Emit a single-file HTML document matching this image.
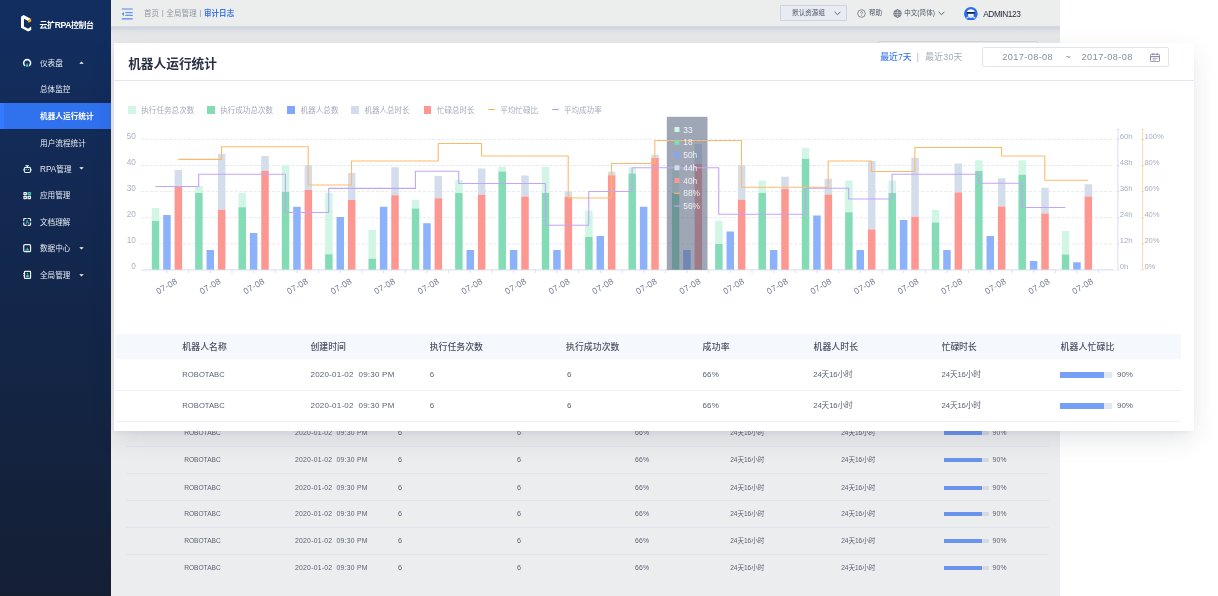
<!DOCTYPE html>
<html lang="zh-CN">
<head>
<meta charset="utf-8">
<title>云扩RPA控制台 - 机器人运行统计</title>
<style>
*{box-sizing:border-box;margin:0;padding:0}
html,body{width:1218px;height:596px;overflow:hidden;background:#fff}
body{position:relative;font-family:"Liberation Sans","Noto Sans CJK SC",sans-serif;-webkit-font-smoothing:antialiased}
.t{position:absolute;white-space:nowrap;height:20px;line-height:20px}
.abs{position:absolute}
#page{position:absolute;left:0;top:0;width:1060px;height:596px;background:#ecedee;overflow:hidden}
#side{position:absolute;left:0;top:0;width:110.5px;height:596px;background:linear-gradient(180deg,#122e61 0%,#141f34 100%)}
#top{position:absolute;left:110.5px;top:0;width:949.5px;height:26.3px;background:#eceeed}
#strip{position:absolute;left:110.5px;top:26.3px;width:949.5px;height:17px;background:linear-gradient(180deg,#dde0e5 0,#d1d5dd 0.8px,#d2d6de 2.8px,#dfe2e6 4.6px,#e5e7e8 9px,#e8e9ea 16px)}
#bgcard{position:absolute;left:114.8px;top:43px;width:945.2px;height:560px;background:#ecedee}
#ov{position:absolute;left:113.8px;top:42.6px;width:1080.4px;height:388.2px;background:#fff;box-shadow:0 9px 24px -2px rgba(40,50,80,.13),0 3px 6px -2px rgba(40,50,80,.06)}
.hl{position:absolute;height:1px}
#root{position:absolute;left:0;top:0;width:1218px;height:596px;will-change:transform}
</style>
</head>
<body>
<div id="root">

<div id="page">
<div id="strip"></div>
<div id="bgcard"></div>
<div class="abs" style="left:876.5px;top:40.6px;width:161px;height:18px;border:1px solid #d4d8e2;border-radius:2px;background:#eceded"></div>
<div class="hl" style="left:126.4px;top:446.2px;width:922.2px;background:#e0e4ee"></div>
<div class="hl" style="left:126.4px;top:473.0px;width:922.2px;background:#e0e4ee"></div>
<div class="hl" style="left:126.4px;top:500.0px;width:922.2px;background:#e0e4ee"></div>
<div class="hl" style="left:126.4px;top:527.1px;width:922.2px;background:#e0e4ee"></div>
<div class="hl" style="left:126.4px;top:554.2px;width:922.2px;background:#e0e4ee"></div>
<div class="t " style="left:184.20px;top:423.30px;font-size:6.60px;color:#5b6170;font-weight:400;letter-spacing:-0.002px;">ROBOTABC</div>
<div class="t " style="left:295.00px;top:423.30px;font-size:6.80px;color:#5b6170;font-weight:400;letter-spacing:0.253px;">2020-01-02&nbsp; 09:30 PM</div>
<div class="t " style="left:398.00px;top:423.30px;font-size:7.20px;color:#5b6170;font-weight:400;">6</div>
<div class="t " style="left:517.00px;top:423.30px;font-size:7.20px;color:#5b6170;font-weight:400;">6</div>
<div class="t " style="left:635.00px;top:423.30px;font-size:6.80px;color:#5b6170;font-weight:400;letter-spacing:0.230px;">66%</div>
<div class="t " style="left:730.20px;top:423.30px;font-size:6.60px;color:#5b6170;font-weight:400;letter-spacing:-0.050px;">24天16小时</div>
<div class="t " style="left:841.20px;top:423.30px;font-size:6.60px;color:#5b6170;font-weight:400;letter-spacing:-0.050px;">24天16小时</div>
<div class="abs" style="left:944.2px;top:431.3px;width:44.6px;height:4px;background:#d6d9e0"></div>
<div class="abs" style="left:944.2px;top:431.3px;width:37.5px;height:4px;background:#6a94ec"></div>
<div class="t " style="left:992.60px;top:423.30px;font-size:6.80px;color:#5b6170;font-weight:400;letter-spacing:0.230px;">90%</div>
<div class="t " style="left:184.20px;top:450.40px;font-size:6.60px;color:#5b6170;font-weight:400;letter-spacing:-0.002px;">ROBOTABC</div>
<div class="t " style="left:295.00px;top:450.40px;font-size:6.80px;color:#5b6170;font-weight:400;letter-spacing:0.253px;">2020-01-02&nbsp; 09:30 PM</div>
<div class="t " style="left:398.00px;top:450.40px;font-size:7.20px;color:#5b6170;font-weight:400;">6</div>
<div class="t " style="left:517.00px;top:450.40px;font-size:7.20px;color:#5b6170;font-weight:400;">6</div>
<div class="t " style="left:635.00px;top:450.40px;font-size:6.80px;color:#5b6170;font-weight:400;letter-spacing:0.230px;">66%</div>
<div class="t " style="left:730.20px;top:450.40px;font-size:6.60px;color:#5b6170;font-weight:400;letter-spacing:-0.050px;">24天16小时</div>
<div class="t " style="left:841.20px;top:450.40px;font-size:6.60px;color:#5b6170;font-weight:400;letter-spacing:-0.050px;">24天16小时</div>
<div class="abs" style="left:944.2px;top:458.4px;width:44.6px;height:4px;background:#d6d9e0"></div>
<div class="abs" style="left:944.2px;top:458.4px;width:37.5px;height:4px;background:#6a94ec"></div>
<div class="t " style="left:992.60px;top:450.40px;font-size:6.80px;color:#5b6170;font-weight:400;letter-spacing:0.230px;">90%</div>
<div class="t " style="left:184.20px;top:477.50px;font-size:6.60px;color:#5b6170;font-weight:400;letter-spacing:-0.002px;">ROBOTABC</div>
<div class="t " style="left:295.00px;top:477.50px;font-size:6.80px;color:#5b6170;font-weight:400;letter-spacing:0.253px;">2020-01-02&nbsp; 09:30 PM</div>
<div class="t " style="left:398.00px;top:477.50px;font-size:7.20px;color:#5b6170;font-weight:400;">6</div>
<div class="t " style="left:517.00px;top:477.50px;font-size:7.20px;color:#5b6170;font-weight:400;">6</div>
<div class="t " style="left:635.00px;top:477.50px;font-size:6.80px;color:#5b6170;font-weight:400;letter-spacing:0.230px;">66%</div>
<div class="t " style="left:730.20px;top:477.50px;font-size:6.60px;color:#5b6170;font-weight:400;letter-spacing:-0.050px;">24天16小时</div>
<div class="t " style="left:841.20px;top:477.50px;font-size:6.60px;color:#5b6170;font-weight:400;letter-spacing:-0.050px;">24天16小时</div>
<div class="abs" style="left:944.2px;top:485.5px;width:44.6px;height:4px;background:#d6d9e0"></div>
<div class="abs" style="left:944.2px;top:485.5px;width:37.5px;height:4px;background:#6a94ec"></div>
<div class="t " style="left:992.60px;top:477.50px;font-size:6.80px;color:#5b6170;font-weight:400;letter-spacing:0.230px;">90%</div>
<div class="t " style="left:184.20px;top:504.30px;font-size:6.60px;color:#5b6170;font-weight:400;letter-spacing:-0.002px;">ROBOTABC</div>
<div class="t " style="left:295.00px;top:504.30px;font-size:6.80px;color:#5b6170;font-weight:400;letter-spacing:0.253px;">2020-01-02&nbsp; 09:30 PM</div>
<div class="t " style="left:398.00px;top:504.30px;font-size:7.20px;color:#5b6170;font-weight:400;">6</div>
<div class="t " style="left:517.00px;top:504.30px;font-size:7.20px;color:#5b6170;font-weight:400;">6</div>
<div class="t " style="left:635.00px;top:504.30px;font-size:6.80px;color:#5b6170;font-weight:400;letter-spacing:0.230px;">66%</div>
<div class="t " style="left:730.20px;top:504.30px;font-size:6.60px;color:#5b6170;font-weight:400;letter-spacing:-0.050px;">24天16小时</div>
<div class="t " style="left:841.20px;top:504.30px;font-size:6.60px;color:#5b6170;font-weight:400;letter-spacing:-0.050px;">24天16小时</div>
<div class="abs" style="left:944.2px;top:512.3px;width:44.6px;height:4px;background:#d6d9e0"></div>
<div class="abs" style="left:944.2px;top:512.3px;width:37.5px;height:4px;background:#6a94ec"></div>
<div class="t " style="left:992.60px;top:504.30px;font-size:6.80px;color:#5b6170;font-weight:400;letter-spacing:0.230px;">90%</div>
<div class="t " style="left:184.20px;top:531.40px;font-size:6.60px;color:#5b6170;font-weight:400;letter-spacing:-0.002px;">ROBOTABC</div>
<div class="t " style="left:295.00px;top:531.40px;font-size:6.80px;color:#5b6170;font-weight:400;letter-spacing:0.253px;">2020-01-02&nbsp; 09:30 PM</div>
<div class="t " style="left:398.00px;top:531.40px;font-size:7.20px;color:#5b6170;font-weight:400;">6</div>
<div class="t " style="left:517.00px;top:531.40px;font-size:7.20px;color:#5b6170;font-weight:400;">6</div>
<div class="t " style="left:635.00px;top:531.40px;font-size:6.80px;color:#5b6170;font-weight:400;letter-spacing:0.230px;">66%</div>
<div class="t " style="left:730.20px;top:531.40px;font-size:6.60px;color:#5b6170;font-weight:400;letter-spacing:-0.050px;">24天16小时</div>
<div class="t " style="left:841.20px;top:531.40px;font-size:6.60px;color:#5b6170;font-weight:400;letter-spacing:-0.050px;">24天16小时</div>
<div class="abs" style="left:944.2px;top:539.4px;width:44.6px;height:4px;background:#d6d9e0"></div>
<div class="abs" style="left:944.2px;top:539.4px;width:37.5px;height:4px;background:#6a94ec"></div>
<div class="t " style="left:992.60px;top:531.40px;font-size:6.80px;color:#5b6170;font-weight:400;letter-spacing:0.230px;">90%</div>
<div class="t " style="left:184.20px;top:558.40px;font-size:6.60px;color:#5b6170;font-weight:400;letter-spacing:-0.002px;">ROBOTABC</div>
<div class="t " style="left:295.00px;top:558.40px;font-size:6.80px;color:#5b6170;font-weight:400;letter-spacing:0.253px;">2020-01-02&nbsp; 09:30 PM</div>
<div class="t " style="left:398.00px;top:558.40px;font-size:7.20px;color:#5b6170;font-weight:400;">6</div>
<div class="t " style="left:517.00px;top:558.40px;font-size:7.20px;color:#5b6170;font-weight:400;">6</div>
<div class="t " style="left:635.00px;top:558.40px;font-size:6.80px;color:#5b6170;font-weight:400;letter-spacing:0.230px;">66%</div>
<div class="t " style="left:730.20px;top:558.40px;font-size:6.60px;color:#5b6170;font-weight:400;letter-spacing:-0.050px;">24天16小时</div>
<div class="t " style="left:841.20px;top:558.40px;font-size:6.60px;color:#5b6170;font-weight:400;letter-spacing:-0.050px;">24天16小时</div>
<div class="abs" style="left:944.2px;top:566.4px;width:44.6px;height:4px;background:#d6d9e0"></div>
<div class="abs" style="left:944.2px;top:566.4px;width:37.5px;height:4px;background:#6a94ec"></div>
<div class="t " style="left:992.60px;top:558.40px;font-size:6.80px;color:#5b6170;font-weight:400;letter-spacing:0.230px;">90%</div>
<div id="top"></div>
<svg class="abs" style="left:121px;top:7.5px" width="13" height="12" viewBox="0 0 13 12">
<g stroke="#5585ea" fill="none" stroke-linecap="round"><path d="M1.2 1.03H11.3M1.2 10.85H11.3" stroke-width="1.15"/><path d="M4.8 4.6H11.3M4.8 7.38H11.3" stroke-width="1.3" stroke="#6b95ec"/></g>
<path d="M0.74 6L3 3.9V8.1Z" fill="#5585ea"/></svg>
<div class="t " style="left:144.00px;top:4.30px;font-size:7.50px;color:#8f95a3;font-weight:400;letter-spacing:0.097px;">首页 <span style="position:relative;top:-0.9px;font-size:8px;margin:0 0.3px">|</span> 全局管理 <span style="position:relative;top:-0.9px;font-size:8px;margin:0 0.3px">|</span> <b style="color:#3b74e6;font-weight:700">审计日志</b></div>
<div class="abs" style="left:780.3px;top:5.4px;width:66.3px;height:15.5px;border:1px solid #ccd3e2;background:#e8ebf1;border-radius:1px"></div>
<div class="t " style="left:792.20px;top:3.40px;font-size:6.50px;color:#4b5263;font-weight:400;letter-spacing:0.060px;">默认资源组</div>
<svg class="abs" style="left:834.3px;top:10.8px" width="7" height="5" viewBox="0 0 7 5"><path d="M0.6 0.8L3.5 3.7L6.4 0.8" stroke="#4b5263" stroke-width="0.9" fill="none"/></svg>
<svg class="abs" style="left:857.4px;top:9.1px" width="9" height="9" viewBox="0 0 9 9"><circle cx="4.5" cy="4.5" r="3.8" stroke="#5a6070" stroke-width="0.7" fill="none"/><path d="M3.4 3.6C3.4 2.3 5.6 2.3 5.6 3.6C5.6 4.4 4.5 4.4 4.5 5.3M4.5 6.1V6.8" stroke="#5a6070" stroke-width="0.7" fill="none"/></svg>
<div class="t " style="left:869.00px;top:3.40px;font-size:6.50px;color:#4b5263;font-weight:400;letter-spacing:0.000px;">帮助</div>
<svg class="abs" style="left:892.9px;top:9.1px" width="9" height="9" viewBox="0 0 9 9"><g stroke="#5a6070" stroke-width="0.7" fill="none"><circle cx="4.5" cy="4.5" r="3.8"/><ellipse cx="4.5" cy="4.5" rx="1.7" ry="3.8"/><path d="M0.7 4.5H8.3M1.2 2.7H7.8M1.2 6.3H7.8"/></g></svg>
<div class="t " style="left:904.20px;top:3.40px;font-size:6.50px;color:#4b5263;font-weight:400;letter-spacing:0.076px;">中文(简体)</div>
<svg class="abs" style="left:938.2px;top:10.8px" width="7" height="5" viewBox="0 0 7 5"><path d="M0.6 0.8L3.5 3.7L6.4 0.8" stroke="#4b5263" stroke-width="0.9" fill="none"/></svg>
<svg class="abs" style="left:964.25px;top:6.5px" width="13.7" height="13.7" viewBox="0 0 27.4 27.4">
<circle cx="13.7" cy="13.7" r="13.7" fill="#2b6bee"/>
<path d="M3.8 21.6L8.6 18.6L9.6 21.4L5.4 23.6ZM23.6 21.6L18.8 18.6L17.8 21.4L22 23.6Z" fill="#dfe9fb" opacity="0.85"/>
<path d="M6 10.4C6 2.6 21.4 2.6 21.4 10.4Z" fill="#ffffff"/>
<path d="M7.6 13.2H19.8L18.6 19.6C17.2 22.6 10.2 22.6 8.8 19.6Z" fill="#f4f8ff"/>
<path d="M11.6 16.4H15.8L15.2 20.4H12.2Z" fill="#cfe0fb"/>
<rect x="5.6" y="9.8" width="16.2" height="3.8" rx="1.2" fill="#14244e"/>
</svg>
<div class="t " style="left:983.20px;top:3.50px;font-size:8.30px;color:#262c3a;font-weight:400;letter-spacing:-0.410px;">ADMIN123</div>
<div id="side">
<svg class="abs" style="left:20px;top:14px" width="12" height="18" viewBox="0 0 12 18">
<path d="M0.98 2.86L3.66 0.98L11.18 5L8.06 6.3V6.9L3.93 4.74V12.5L8.2 14.67L11.18 12.5V16L8.2 17.6L0.98 13.86Z" fill="#fff"/>
<path d="M8.06 6.3L11.18 5V7.42L8.06 8.76Z" fill="#f7b500"/>
</svg>
<div class="t " style="left:39.60px;top:15.40px;font-size:7.90px;color:#ffffff;font-weight:700;letter-spacing:-0.375px;">云扩<span style="font-size:8.6px">RPA</span>控制台</div>
<div class="abs" style="left:0;top:102.8px;width:110.5px;height:26.1px;background:#3071ee"></div>
<div class="abs" style="left:0;top:102.8px;width:4.2px;height:26.1px;background:#337aff"></div>
<div class="t " style="left:40.00px;top:54.00px;font-size:7.60px;color:#e6eaf2;font-weight:400;letter-spacing:0.006px;">仪表盘</div>
<div class="t " style="left:40.00px;top:80.20px;font-size:7.60px;color:#e6eaf2;font-weight:400;letter-spacing:0.031px;">总体监控</div>
<div class="t " style="left:40.00px;top:106.80px;font-size:7.65px;color:#ffffff;font-weight:700;letter-spacing:0.017px;">机器人运行统计</div>
<div class="t " style="left:40.00px;top:133.50px;font-size:7.60px;color:#e6eaf2;font-weight:400;letter-spacing:0.040px;">用户流程统计</div>
<div class="t " style="left:40.00px;top:159.60px;font-size:7.60px;color:#e6eaf2;font-weight:400;letter-spacing:0.016px;"><span style="font-size:8.2px">RPA</span>管理</div>
<div class="t " style="left:40.00px;top:186.40px;font-size:7.60px;color:#e6eaf2;font-weight:400;letter-spacing:0.031px;">应用管理</div>
<div class="t " style="left:40.00px;top:212.60px;font-size:7.60px;color:#e6eaf2;font-weight:400;letter-spacing:0.031px;">文档理解</div>
<div class="t " style="left:40.00px;top:239.10px;font-size:7.60px;color:#e6eaf2;font-weight:400;letter-spacing:0.031px;">数据中心</div>
<div class="t " style="left:40.00px;top:265.60px;font-size:7.60px;color:#e6eaf2;font-weight:400;letter-spacing:0.031px;">全局管理</div>
<svg class="abs" style="left:78.8px;top:61.4px" width="5" height="3" viewBox="0 0 5 3"><path d="M0.3 2.8L2.5 0.4L4.7 2.8Z" fill="#fff"/></svg>
<svg class="abs" style="left:78.8px;top:167.4px" width="5" height="3" viewBox="0 0 5 3"><path d="M0.3 0.2L2.5 2.6L4.7 0.2Z" fill="#fff"/></svg>
<svg class="abs" style="left:78.8px;top:247.0px" width="5" height="3" viewBox="0 0 5 3"><path d="M0.3 0.2L2.5 2.6L4.7 0.2Z" fill="#fff"/></svg>
<svg class="abs" style="left:78.8px;top:273.5px" width="5" height="3" viewBox="0 0 5 3"><path d="M0.3 0.2L2.5 2.6L4.7 0.2Z" fill="#fff"/></svg>
<svg class="abs" style="left:22px;top:58px" width="10" height="10" viewBox="0 0 10 10"><path d="M3.19 7.92A3.45 3.45 0 1 1 7.05 7.92" stroke="#eef1f7" stroke-width="1.6" fill="none"/><path d="M5.12 4.6L6.45 8.84H3.8Z" fill="#3fd6c4"/></svg>
<svg class="abs" style="left:22px;top:164px" width="10" height="10" viewBox="0 0 10 10"><path d="M3.4 1.5H6.9" stroke="#eef1f7" stroke-width="0.8" fill="none"/><path d="M5.2 1.5V3.2" stroke="#eef1f7" stroke-width="1.2" fill="none"/><rect x="2.3" y="3.35" width="6.3" height="5.1" rx="1.5" stroke="#eef1f7" stroke-width="1.15" fill="none"/><path d="M1.4 5V6.6M9.4 5V6.6" stroke="#eef1f7" stroke-width="0.5"/><circle cx="4.2" cy="5.55" r="0.7" fill="#3fd6c4"/><circle cx="6.45" cy="5.55" r="0.7" fill="#3fd6c4"/></svg>
<svg class="abs" style="left:22px;top:191px" width="10" height="10" viewBox="0 0 10 10"><g stroke="#eef1f7" stroke-width="1.25" fill="none"><rect x="1.95" y="1.5" width="2.4" height="2.1" rx="0.3"/><rect x="1.95" y="5.3" width="2.4" height="2.2" rx="0.3"/><rect x="6.05" y="5.3" width="2.4" height="2.2" rx="0.3"/></g><rect x="6.05" y="1.5" width="2.4" height="2.1" rx="0.3" stroke="#3fd6c4" stroke-width="1.25" fill="none"/></svg>
<svg class="abs" style="left:22px;top:217px" width="10" height="10" viewBox="0 0 10 10"><path d="M1.74 4.3V2.5Q1.74 1.5 2.74 1.5H4.6M5.7 1.5H7.54Q8.54 1.5 8.54 2.5V4.3M1.74 5.6V7.3Q1.74 8.3 2.74 8.3H4.6M5.7 8.3H7.54Q8.54 8.3 8.54 7.3V5.6" stroke="#eef1f7" stroke-width="1.2" fill="none"/><text x="5.15" y="6.7" text-anchor="middle" font-size="4.9" font-weight="700" fill="#3fd6c4" font-family="Liberation Sans, sans-serif">A</text></svg>
<svg class="abs" style="left:22px;top:243px" width="10" height="10" viewBox="0 0 10 10"><rect x="1.74" y="1.7" width="6.8" height="7" rx="1" stroke="#eef1f7" stroke-width="1.2" fill="none"/><path d="M3.25 7.6V6.7L4.6 6.2L5.37 4.1L6.1 6.2L7.05 6.7V7.6Z" fill="#3fd6c4"/></svg>
<svg class="abs" style="left:22px;top:270px" width="10" height="10" viewBox="0 0 10 10"><rect x="2.5" y="1.4" width="6.04" height="7" rx="0.6" stroke="#eef1f7" stroke-width="1.2" fill="none"/><path d="M1.1 3.5H2.3M1.1 5.7H2.3" stroke="#eef1f7" stroke-width="0.9"/><circle cx="5.5" cy="3.75" r="0.85" fill="#3fd6c4"/><path d="M4.1 7.1V6C4.1 4.5 6.9 4.5 6.9 6V7.1Z" fill="#3fd6c4"/></svg>
</div>
</div>
<div id="ov"></div>
<div class="t " style="left:128.20px;top:53.50px;font-size:12.70px;color:#2a3142;font-weight:700;letter-spacing:-0.009px;">机器人运行统计</div>
<div class="hl" style="left:113.8px;top:80px;width:1080.4px;background:#e3e7f2"></div>
<div class="t " style="left:880.30px;top:47.30px;font-size:8.80px;color:#3b78f0;font-weight:500;letter-spacing:0.026px;">最近7天</div>
<div class="t " style="left:916.80px;top:46.60px;font-size:8.50px;color:#a9afbd;font-weight:400;">|</div>
<div class="t " style="left:925.30px;top:47.30px;font-size:8.80px;color:#a3a9b8;font-weight:400;letter-spacing:0.222px;">最近30天</div>
<div class="abs" style="left:982.3px;top:47.3px;width:186.3px;height:19.8px;border:1px solid #e0e4ef;border-radius:2px;background:#fff"></div>
<div class="t " style="left:1002.30px;top:47.40px;font-size:9.20px;color:#858c9e;font-weight:400;letter-spacing:0.380px;">2017-08-08</div>
<div class="t " style="left:1065.60px;top:47.20px;font-size:9.00px;color:#858c9e;font-weight:400;">~</div>
<div class="t " style="left:1081.60px;top:47.40px;font-size:9.20px;color:#858c9e;font-weight:400;letter-spacing:0.420px;">2017-08-08</div>
<svg class="abs" style="left:1150.2px;top:52.6px" width="10" height="9.4" viewBox="0 0 10 9.4"><rect x="0.6" y="1.3" width="8.8" height="7.5" rx="1" stroke="#7f8699" stroke-width="1" fill="none"/><path d="M0.6 3.6H9.4" stroke="#7f8699" stroke-width="1"/><path d="M2.8 0.2V2.2M7.2 0.2V2.2" stroke="#7f8699" stroke-width="0.9"/><path d="M2.6 5.4H7.4M2.6 7H5.6" stroke="#7f8699" stroke-width="0.7"/></svg>
<svg class="abs" style="left:0;top:0" width="1218" height="596" viewBox="0 0 1218 596" font-family='&quot;Liberation Sans&quot;,&quot;Noto Sans CJK SC&quot;,sans-serif'>
<!--legend-->
<line x1="140.8" y1="139.4" x2="1114" y2="139.4" stroke="#e3e6ef" stroke-width="0.9" stroke-dasharray="3 1.7"/>
<line x1="140.8" y1="165.5" x2="1114" y2="165.5" stroke="#e3e6ef" stroke-width="0.9" stroke-dasharray="3 1.7"/>
<line x1="140.8" y1="191.6" x2="1114" y2="191.6" stroke="#e3e6ef" stroke-width="0.9" stroke-dasharray="3 1.7"/>
<line x1="140.8" y1="217.7" x2="1114" y2="217.7" stroke="#e3e6ef" stroke-width="0.9" stroke-dasharray="3 1.7"/>
<line x1="140.8" y1="243.8" x2="1114" y2="243.8" stroke="#e3e6ef" stroke-width="0.9" stroke-dasharray="3 1.7"/>
<line x1="141" y1="269.9" x2="1114.3" y2="269.9" stroke="#dfe3f2" stroke-width="1.1"/>
<path d="M167.00 270V273.2M188.67 270V273.2M210.33 270V273.2M232.00 270V273.2M253.67 270V273.2M275.34 270V273.2M297.00 270V273.2M318.67 270V273.2M340.34 270V273.2M362.00 270V273.2M383.67 270V273.2M405.34 270V273.2M427.00 270V273.2M448.67 270V273.2M470.34 270V273.2M492.00 270V273.2M513.67 270V273.2M535.34 270V273.2M557.01 270V273.2M578.67 270V273.2M600.34 270V273.2M622.01 270V273.2M643.67 270V273.2M665.34 270V273.2M687.01 270V273.2M708.68 270V273.2M730.34 270V273.2M752.01 270V273.2M773.68 270V273.2M795.34 270V273.2M817.01 270V273.2M838.68 270V273.2M860.34 270V273.2M882.01 270V273.2M903.68 270V273.2M925.35 270V273.2M947.01 270V273.2M968.68 270V273.2M990.35 270V273.2M1012.01 270V273.2M1033.68 270V273.2M1055.35 270V273.2M1077.01 270V273.2M1098.68 270V273.2" stroke="#d9def0" stroke-width="0.9" fill="none"/>
<text x="135.8" y="138.8" text-anchor="end" font-size="8.2" fill="#aab1c2">50</text>
<text x="135.8" y="164.9" text-anchor="end" font-size="8.2" fill="#aab1c2">40</text>
<text x="135.8" y="191.0" text-anchor="end" font-size="8.2" fill="#aab1c2">30</text>
<text x="135.8" y="217.1" text-anchor="end" font-size="8.2" fill="#aab1c2">20</text>
<text x="135.8" y="243.2" text-anchor="end" font-size="8.2" fill="#aab1c2">10</text>
<text x="135.8" y="269.3" text-anchor="end" font-size="8.2" fill="#aab1c2">0</text>
<path d="M1117.9 129.3V269.9M1116.5 129.3H1119.3M1116.5 139.4H1119.3M1116.5 165.5H1119.3M1116.5 191.6H1119.3M1116.5 217.7H1119.3M1116.5 243.8H1119.3M1116.5 269.9H1119.3" stroke="#d3d8e6" stroke-width="0.8" fill="none"/>
<path d="M1142.6 129.3V269.9M1141.2 129.3H1144M1141.2 139.4H1144M1141.2 165.5H1144M1141.2 191.6H1144M1141.2 217.7H1144M1141.2 243.8H1144M1141.2 269.9H1144" stroke="#fbcf9a" stroke-width="0.8" fill="none"/>
<text x="1119.7" y="138.7" font-size="7.8" fill="#a7afc1">60h</text>
<text x="1144.4" y="138.7" font-size="7.6" fill="#a7afc1">100%</text>
<text x="1119.7" y="164.8" font-size="7.8" fill="#a7afc1">48h</text>
<text x="1144.4" y="164.8" font-size="7.6" fill="#a7afc1">80%</text>
<text x="1119.7" y="190.9" font-size="7.8" fill="#a7afc1">36h</text>
<text x="1144.4" y="190.9" font-size="7.6" fill="#a7afc1">60%</text>
<text x="1119.7" y="217.0" font-size="7.8" fill="#a7afc1">24h</text>
<text x="1144.4" y="217.0" font-size="7.6" fill="#a7afc1">40%</text>
<text x="1119.7" y="243.1" font-size="7.8" fill="#a7afc1">12h</text>
<text x="1144.4" y="243.1" font-size="7.6" fill="#a7afc1">20%</text>
<text x="1119.7" y="269.2" font-size="7.8" fill="#a7afc1">0h</text>
<text x="1144.4" y="269.2" font-size="7.6" fill="#a7afc1">0%</text>
<rect x="151.80" y="208.00" width="7.50" height="13.00" fill="#d2f6e6"/>
<rect x="151.80" y="221.00" width="7.50" height="48.60" fill="#84dcb6"/>
<rect x="163.20" y="215.00" width="7.50" height="54.60" fill="#8cb2fb"/>
<rect x="174.60" y="170.00" width="7.50" height="16.75" fill="#d4ddec"/>
<rect x="174.60" y="186.75" width="7.50" height="82.85" fill="#fd9792"/>
<rect x="195.13" y="186.00" width="7.50" height="7.00" fill="#d2f6e6"/>
<rect x="195.13" y="193.00" width="7.50" height="76.60" fill="#84dcb6"/>
<rect x="206.53" y="250.00" width="7.50" height="19.60" fill="#8cb2fb"/>
<rect x="217.93" y="154.00" width="7.50" height="55.75" fill="#d4ddec"/>
<rect x="217.93" y="209.75" width="7.50" height="59.85" fill="#fd9792"/>
<rect x="238.47" y="193.00" width="7.50" height="14.25" fill="#d2f6e6"/>
<rect x="238.47" y="207.25" width="7.50" height="62.35" fill="#84dcb6"/>
<rect x="249.87" y="233.00" width="7.50" height="36.60" fill="#8cb2fb"/>
<rect x="261.27" y="156.00" width="7.50" height="15.00" fill="#d4ddec"/>
<rect x="261.27" y="171.00" width="7.50" height="98.60" fill="#fd9792"/>
<rect x="281.80" y="165.25" width="7.50" height="26.50" fill="#d2f6e6"/>
<rect x="281.80" y="191.75" width="7.50" height="77.85" fill="#84dcb6"/>
<rect x="293.20" y="206.75" width="7.50" height="62.85" fill="#8cb2fb"/>
<rect x="304.60" y="165.25" width="7.50" height="24.75" fill="#d4ddec"/>
<rect x="304.60" y="190.00" width="7.50" height="79.60" fill="#fd9792"/>
<rect x="325.13" y="193.00" width="7.50" height="61.25" fill="#d2f6e6"/>
<rect x="325.13" y="254.25" width="7.50" height="15.35" fill="#84dcb6"/>
<rect x="336.53" y="217.00" width="7.50" height="52.60" fill="#8cb2fb"/>
<rect x="347.93" y="173.00" width="7.50" height="27.00" fill="#d4ddec"/>
<rect x="347.93" y="200.00" width="7.50" height="69.60" fill="#fd9792"/>
<rect x="368.47" y="229.75" width="7.50" height="29.00" fill="#d2f6e6"/>
<rect x="368.47" y="258.75" width="7.50" height="10.85" fill="#84dcb6"/>
<rect x="379.87" y="206.75" width="7.50" height="62.85" fill="#8cb2fb"/>
<rect x="391.27" y="167.25" width="7.50" height="28.00" fill="#d4ddec"/>
<rect x="391.27" y="195.25" width="7.50" height="74.35" fill="#fd9792"/>
<rect x="411.80" y="199.75" width="7.50" height="8.75" fill="#d2f6e6"/>
<rect x="411.80" y="208.50" width="7.50" height="61.10" fill="#84dcb6"/>
<rect x="423.20" y="223.25" width="7.50" height="46.35" fill="#8cb2fb"/>
<rect x="434.60" y="176.00" width="7.50" height="22.25" fill="#d4ddec"/>
<rect x="434.60" y="198.25" width="7.50" height="71.35" fill="#fd9792"/>
<rect x="455.13" y="179.75" width="7.50" height="13.25" fill="#d2f6e6"/>
<rect x="455.13" y="193.00" width="7.50" height="76.60" fill="#84dcb6"/>
<rect x="466.53" y="250.00" width="7.50" height="19.60" fill="#8cb2fb"/>
<rect x="477.93" y="168.50" width="7.50" height="26.25" fill="#d4ddec"/>
<rect x="477.93" y="194.75" width="7.50" height="74.85" fill="#fd9792"/>
<rect x="498.46" y="166.75" width="7.50" height="4.75" fill="#d2f6e6"/>
<rect x="498.46" y="171.50" width="7.50" height="98.10" fill="#84dcb6"/>
<rect x="509.86" y="250.00" width="7.50" height="19.60" fill="#8cb2fb"/>
<rect x="521.26" y="175.50" width="7.50" height="21.00" fill="#d4ddec"/>
<rect x="521.26" y="196.50" width="7.50" height="73.10" fill="#fd9792"/>
<rect x="541.80" y="166.75" width="7.50" height="26.25" fill="#d2f6e6"/>
<rect x="541.80" y="193.00" width="7.50" height="76.60" fill="#84dcb6"/>
<rect x="553.20" y="250.00" width="7.50" height="19.60" fill="#8cb2fb"/>
<rect x="564.60" y="191.50" width="7.50" height="5.50" fill="#d4ddec"/>
<rect x="564.60" y="197.00" width="7.50" height="72.60" fill="#fd9792"/>
<rect x="585.13" y="210.50" width="7.50" height="26.50" fill="#d2f6e6"/>
<rect x="585.13" y="237.00" width="7.50" height="32.60" fill="#84dcb6"/>
<rect x="596.53" y="236.00" width="7.50" height="33.60" fill="#8cb2fb"/>
<rect x="607.93" y="171.75" width="7.50" height="3.50" fill="#d4ddec"/>
<rect x="607.93" y="175.25" width="7.50" height="94.35" fill="#fd9792"/>
<rect x="628.46" y="167.25" width="7.50" height="6.25" fill="#d2f6e6"/>
<rect x="628.46" y="173.50" width="7.50" height="96.10" fill="#84dcb6"/>
<rect x="639.86" y="206.75" width="7.50" height="62.85" fill="#8cb2fb"/>
<rect x="651.26" y="154.75" width="7.50" height="3.25" fill="#d4ddec"/>
<rect x="651.26" y="158.00" width="7.50" height="111.60" fill="#fd9792"/>
<rect x="671.80" y="168.50" width="7.50" height="24.50" fill="#d2f6e6"/>
<rect x="671.80" y="193.00" width="7.50" height="76.60" fill="#84dcb6"/>
<rect x="683.20" y="250.00" width="7.50" height="19.60" fill="#8cb2fb"/>
<rect x="694.60" y="144.00" width="7.50" height="20.00" fill="#d4ddec"/>
<rect x="694.60" y="164.00" width="7.50" height="105.60" fill="#fd9792"/>
<rect x="715.13" y="221.00" width="7.50" height="23.00" fill="#d2f6e6"/>
<rect x="715.13" y="244.00" width="7.50" height="25.60" fill="#84dcb6"/>
<rect x="726.53" y="231.50" width="7.50" height="38.10" fill="#8cb2fb"/>
<rect x="737.93" y="165.25" width="7.50" height="34.50" fill="#d4ddec"/>
<rect x="737.93" y="199.75" width="7.50" height="69.85" fill="#fd9792"/>
<rect x="758.46" y="180.50" width="7.50" height="12.50" fill="#d2f6e6"/>
<rect x="758.46" y="193.00" width="7.50" height="76.60" fill="#84dcb6"/>
<rect x="769.86" y="250.00" width="7.50" height="19.60" fill="#8cb2fb"/>
<rect x="781.26" y="176.75" width="7.50" height="12.00" fill="#d4ddec"/>
<rect x="781.26" y="188.75" width="7.50" height="80.85" fill="#fd9792"/>
<rect x="801.80" y="147.75" width="7.50" height="11.00" fill="#d2f6e6"/>
<rect x="801.80" y="158.75" width="7.50" height="110.85" fill="#84dcb6"/>
<rect x="813.20" y="215.50" width="7.50" height="54.10" fill="#8cb2fb"/>
<rect x="824.60" y="178.75" width="7.50" height="15.75" fill="#d4ddec"/>
<rect x="824.60" y="194.50" width="7.50" height="75.10" fill="#fd9792"/>
<rect x="845.13" y="180.50" width="7.50" height="31.75" fill="#d2f6e6"/>
<rect x="845.13" y="212.25" width="7.50" height="57.35" fill="#84dcb6"/>
<rect x="856.53" y="250.00" width="7.50" height="19.60" fill="#8cb2fb"/>
<rect x="867.93" y="161.00" width="7.50" height="68.50" fill="#d4ddec"/>
<rect x="867.93" y="229.50" width="7.50" height="40.10" fill="#fd9792"/>
<rect x="888.46" y="180.50" width="7.50" height="12.50" fill="#d2f6e6"/>
<rect x="888.46" y="193.00" width="7.50" height="76.60" fill="#84dcb6"/>
<rect x="899.86" y="220.00" width="7.50" height="49.60" fill="#8cb2fb"/>
<rect x="911.26" y="157.75" width="7.50" height="59.00" fill="#d4ddec"/>
<rect x="911.26" y="216.75" width="7.50" height="52.85" fill="#fd9792"/>
<rect x="931.79" y="210.00" width="7.50" height="12.50" fill="#d2f6e6"/>
<rect x="931.79" y="222.50" width="7.50" height="47.10" fill="#84dcb6"/>
<rect x="943.19" y="250.00" width="7.50" height="19.60" fill="#8cb2fb"/>
<rect x="954.59" y="163.50" width="7.50" height="29.00" fill="#d4ddec"/>
<rect x="954.59" y="192.50" width="7.50" height="77.10" fill="#fd9792"/>
<rect x="975.13" y="160.25" width="7.50" height="10.75" fill="#d2f6e6"/>
<rect x="975.13" y="171.00" width="7.50" height="98.60" fill="#84dcb6"/>
<rect x="986.53" y="236.00" width="7.50" height="33.60" fill="#8cb2fb"/>
<rect x="997.93" y="178.25" width="7.50" height="28.25" fill="#d4ddec"/>
<rect x="997.93" y="206.50" width="7.50" height="63.10" fill="#fd9792"/>
<rect x="1018.46" y="160.25" width="7.50" height="14.50" fill="#d2f6e6"/>
<rect x="1018.46" y="174.75" width="7.50" height="94.85" fill="#84dcb6"/>
<rect x="1029.86" y="261.00" width="7.50" height="8.60" fill="#8cb2fb"/>
<rect x="1041.26" y="187.75" width="7.50" height="25.75" fill="#d4ddec"/>
<rect x="1041.26" y="213.50" width="7.50" height="56.10" fill="#fd9792"/>
<rect x="1061.79" y="231.00" width="7.50" height="23.50" fill="#d2f6e6"/>
<rect x="1061.79" y="254.50" width="7.50" height="15.10" fill="#84dcb6"/>
<rect x="1073.19" y="262.25" width="7.50" height="7.35" fill="#8cb2fb"/>
<rect x="1084.59" y="184.25" width="7.50" height="12.25" fill="#d4ddec"/>
<rect x="1084.59" y="196.50" width="7.50" height="73.10" fill="#fd9792"/>
<rect x="666.8" y="116.8" width="40.7" height="153.1" fill="#5a6782" fill-opacity="0.58"/>
<path d="M178.20 159.40H221.53V146.80H308.20V185.00H351.53V161.00H438.20V143.50H481.53V156.00H568.20V198.00H611.53V163.50H654.86V140.50H741.53V187.20H828.19V161.00H871.53V171.50H914.86V147.50H1001.53V156.00H1044.86V180.30H1088.19" stroke="#fdba6a" stroke-width="1.1" fill="none" stroke-linejoin="round"/>
<path d="M155.40 186.50H198.73V174.30H285.40V212.50H328.73V188.40H415.40V171.30H458.73V183.50H545.40V225.30H588.73V191.50H632.06V167.80H718.73V214.30H805.39V188.30H848.73V199.00H892.06V174.30H978.73V183.30H1022.06V207.50H1065.39" stroke="#c2a5f6" stroke-width="1.1" fill="none" stroke-linejoin="round"/>
<text transform="translate(166.60 286.20) rotate(-30)" text-anchor="middle" font-size="8.6" fill="#717a90" letter-spacing="0.2" y="3">07-08</text>
<text transform="translate(210.22 286.20) rotate(-30)" text-anchor="middle" font-size="8.6" fill="#717a90" letter-spacing="0.2" y="3">07-08</text>
<text transform="translate(253.84 286.20) rotate(-30)" text-anchor="middle" font-size="8.6" fill="#717a90" letter-spacing="0.2" y="3">07-08</text>
<text transform="translate(297.46 286.20) rotate(-30)" text-anchor="middle" font-size="8.6" fill="#717a90" letter-spacing="0.2" y="3">07-08</text>
<text transform="translate(341.08 286.20) rotate(-30)" text-anchor="middle" font-size="8.6" fill="#717a90" letter-spacing="0.2" y="3">07-08</text>
<text transform="translate(384.70 286.20) rotate(-30)" text-anchor="middle" font-size="8.6" fill="#717a90" letter-spacing="0.2" y="3">07-08</text>
<text transform="translate(428.32 286.20) rotate(-30)" text-anchor="middle" font-size="8.6" fill="#717a90" letter-spacing="0.2" y="3">07-08</text>
<text transform="translate(471.94 286.20) rotate(-30)" text-anchor="middle" font-size="8.6" fill="#717a90" letter-spacing="0.2" y="3">07-08</text>
<text transform="translate(515.56 286.20) rotate(-30)" text-anchor="middle" font-size="8.6" fill="#717a90" letter-spacing="0.2" y="3">07-08</text>
<text transform="translate(559.18 286.20) rotate(-30)" text-anchor="middle" font-size="8.6" fill="#717a90" letter-spacing="0.2" y="3">07-08</text>
<text transform="translate(602.80 286.20) rotate(-30)" text-anchor="middle" font-size="8.6" fill="#717a90" letter-spacing="0.2" y="3">07-08</text>
<text transform="translate(646.42 286.20) rotate(-30)" text-anchor="middle" font-size="8.6" fill="#717a90" letter-spacing="0.2" y="3">07-08</text>
<text transform="translate(690.04 286.20) rotate(-30)" text-anchor="middle" font-size="8.6" fill="#717a90" letter-spacing="0.2" y="3">07-08</text>
<text transform="translate(733.66 286.20) rotate(-30)" text-anchor="middle" font-size="8.6" fill="#717a90" letter-spacing="0.2" y="3">07-08</text>
<text transform="translate(777.28 286.20) rotate(-30)" text-anchor="middle" font-size="8.6" fill="#717a90" letter-spacing="0.2" y="3">07-08</text>
<text transform="translate(820.90 286.20) rotate(-30)" text-anchor="middle" font-size="8.6" fill="#717a90" letter-spacing="0.2" y="3">07-08</text>
<text transform="translate(864.52 286.20) rotate(-30)" text-anchor="middle" font-size="8.6" fill="#717a90" letter-spacing="0.2" y="3">07-08</text>
<text transform="translate(908.14 286.20) rotate(-30)" text-anchor="middle" font-size="8.6" fill="#717a90" letter-spacing="0.2" y="3">07-08</text>
<text transform="translate(951.76 286.20) rotate(-30)" text-anchor="middle" font-size="8.6" fill="#717a90" letter-spacing="0.2" y="3">07-08</text>
<text transform="translate(995.38 286.20) rotate(-30)" text-anchor="middle" font-size="8.6" fill="#717a90" letter-spacing="0.2" y="3">07-08</text>
<text transform="translate(1039.00 286.20) rotate(-30)" text-anchor="middle" font-size="8.6" fill="#717a90" letter-spacing="0.2" y="3">07-08</text>
<text transform="translate(1082.62 286.20) rotate(-30)" text-anchor="middle" font-size="8.6" fill="#717a90" letter-spacing="0.2" y="3">07-08</text>
<rect x="674.5" y="127.00" width="5" height="5" fill="#d2f6e6"/>
<text x="683.3" y="132.50" font-size="8.4" fill="#ffffff" fill-opacity="0.85">33</text>
<rect x="674.5" y="139.75" width="5" height="5" fill="#84dcb6"/>
<text x="683.3" y="145.25" font-size="8.4" fill="#ffffff" fill-opacity="0.85">18</text>
<rect x="674.5" y="152.50" width="5" height="5" fill="#7fa8fa"/>
<text x="683.3" y="158.00" font-size="8.4" fill="#ffffff" fill-opacity="0.85">50h</text>
<rect x="674.5" y="165.25" width="5" height="5" fill="#d4ddec"/>
<text x="683.3" y="170.75" font-size="8.4" fill="#ffffff" fill-opacity="0.85">44h</text>
<rect x="674.5" y="178.00" width="5" height="5" fill="#fd9792"/>
<text x="683.3" y="183.50" font-size="8.4" fill="#ffffff" fill-opacity="0.85">40h</text>
<rect x="674" y="192.75" width="6" height="1.1" fill="#fdba6a"/>
<text x="683.3" y="196.25" font-size="8.4" fill="#ffffff" fill-opacity="0.85">88%</text>
<rect x="674" y="205.50" width="6" height="1.1" fill="#c2a5f6"/>
<text x="683.3" y="209.00" font-size="8.4" fill="#ffffff" fill-opacity="0.85">56%</text>
</svg>
<div class="abs" style="left:128.0px;top:106.1px;width:7.6px;height:7.5px;background:#d2f6e6"></div>
<div class="t " style="left:141.20px;top:100.70px;font-size:7.55px;color:#a3abbb;font-weight:400;letter-spacing:0.051px;">执行任务总次数</div>
<div class="abs" style="left:207.1px;top:106.1px;width:7.6px;height:7.5px;background:#84dcb6"></div>
<div class="t " style="left:220.30px;top:100.70px;font-size:7.55px;color:#a3abbb;font-weight:400;letter-spacing:-0.021px;">执行成功总次数</div>
<div class="abs" style="left:287.2px;top:106.1px;width:7.6px;height:7.5px;background:#7fa8fa"></div>
<div class="t " style="left:300.40px;top:100.70px;font-size:7.55px;color:#a3abbb;font-weight:400;letter-spacing:0.090px;">机器人总数</div>
<div class="abs" style="left:351.3px;top:106.1px;width:7.6px;height:7.5px;background:#d4ddec"></div>
<div class="t " style="left:364.60px;top:100.70px;font-size:7.55px;color:#a3abbb;font-weight:400;letter-spacing:-0.066px;">机器人总时长</div>
<div class="abs" style="left:423.7px;top:106.1px;width:7.6px;height:7.5px;background:#fd9792"></div>
<div class="t " style="left:436.90px;top:100.70px;font-size:7.55px;color:#a3abbb;font-weight:400;letter-spacing:-0.050px;">忙碌总时长</div>
<div class="abs" style="left:487.8px;top:109.1px;width:7px;height:1.4px;border-radius:1px;background:#fdb052"></div>
<div class="t " style="left:500.30px;top:100.70px;font-size:7.55px;color:#a3abbb;font-weight:400;letter-spacing:-0.010px;">平均忙碌比</div>
<div class="abs" style="left:551.5px;top:109.1px;width:7px;height:1.4px;border-radius:1px;background:#b794f6"></div>
<div class="t " style="left:564.00px;top:100.70px;font-size:7.55px;color:#a3abbb;font-weight:400;letter-spacing:-0.010px;">平均成功率</div>
<div class="abs" style="left:115.5px;top:333.5px;width:1065px;height:25.7px;background:#f5f8fd"></div>
<div class="t " style="left:182.30px;top:337.40px;font-size:8.90px;color:#4a5163;font-weight:500;letter-spacing:0.065px;">机器人名称</div>
<div class="t " style="left:310.50px;top:337.40px;font-size:8.90px;color:#4a5163;font-weight:500;letter-spacing:-0.025px;">创建时间</div>
<div class="t " style="left:429.70px;top:337.40px;font-size:8.90px;color:#4a5163;font-weight:500;letter-spacing:0.008px;">执行任务次数</div>
<div class="t " style="left:566.10px;top:337.40px;font-size:8.90px;color:#4a5163;font-weight:500;letter-spacing:0.008px;">执行成功次数</div>
<div class="t " style="left:702.50px;top:337.40px;font-size:8.90px;color:#4a5163;font-weight:500;letter-spacing:0.258px;">成功率</div>
<div class="t " style="left:813.50px;top:337.40px;font-size:8.90px;color:#4a5163;font-weight:500;letter-spacing:0.045px;">机器人时长</div>
<div class="t " style="left:941.70px;top:337.40px;font-size:8.90px;color:#4a5163;font-weight:500;letter-spacing:-0.175px;">忙碌时长</div>
<div class="t " style="left:1060.40px;top:337.40px;font-size:8.90px;color:#4a5163;font-weight:500;letter-spacing:0.142px;">机器人忙碌比</div>
<div class="t " style="left:182.30px;top:365.10px;font-size:7.60px;color:#5b6272;font-weight:400;letter-spacing:0.042px;">ROBOTABC</div>
<div class="t " style="left:310.50px;top:365.10px;font-size:8.00px;color:#5b6272;font-weight:400;letter-spacing:0.220px;">2020-01-02&nbsp; 09:30 PM</div>
<div class="t " style="left:429.70px;top:365.10px;font-size:8.00px;color:#5b6272;font-weight:400;">6</div>
<div class="t " style="left:567.00px;top:365.10px;font-size:8.00px;color:#5b6272;font-weight:400;">6</div>
<div class="t " style="left:702.40px;top:365.10px;font-size:8.00px;color:#5b6272;font-weight:400;letter-spacing:0.195px;">66%</div>
<div class="t " style="left:813.30px;top:365.10px;font-size:7.70px;color:#5b6272;font-weight:400;letter-spacing:-0.125px;">24天16小时</div>
<div class="t " style="left:941.60px;top:365.10px;font-size:7.70px;color:#5b6272;font-weight:400;letter-spacing:-0.125px;">24天16小时</div>
<div class="abs" style="left:1060.3px;top:372.2px;width:51.6px;height:5.4px;background:#e3e7ef"></div>
<div class="abs" style="left:1060.3px;top:372.2px;width:43.5px;height:5.4px;background:#76a0f6"></div>
<div class="t " style="left:1117.00px;top:365.10px;font-size:8.00px;color:#5b6272;font-weight:400;letter-spacing:-0.072px;">90%</div>
<div class="t " style="left:182.30px;top:396.10px;font-size:7.60px;color:#5b6272;font-weight:400;letter-spacing:0.042px;">ROBOTABC</div>
<div class="t " style="left:310.50px;top:396.10px;font-size:8.00px;color:#5b6272;font-weight:400;letter-spacing:0.220px;">2020-01-02&nbsp; 09:30 PM</div>
<div class="t " style="left:429.70px;top:396.10px;font-size:8.00px;color:#5b6272;font-weight:400;">6</div>
<div class="t " style="left:567.00px;top:396.10px;font-size:8.00px;color:#5b6272;font-weight:400;">6</div>
<div class="t " style="left:702.40px;top:396.10px;font-size:8.00px;color:#5b6272;font-weight:400;letter-spacing:0.195px;">66%</div>
<div class="t " style="left:813.30px;top:396.10px;font-size:7.70px;color:#5b6272;font-weight:400;letter-spacing:-0.125px;">24天16小时</div>
<div class="t " style="left:941.60px;top:396.10px;font-size:7.70px;color:#5b6272;font-weight:400;letter-spacing:-0.125px;">24天16小时</div>
<div class="abs" style="left:1060.3px;top:403.2px;width:51.6px;height:5.4px;background:#e3e7ef"></div>
<div class="abs" style="left:1060.3px;top:403.2px;width:43.5px;height:5.4px;background:#76a0f6"></div>
<div class="t " style="left:1117.00px;top:396.10px;font-size:8.00px;color:#5b6272;font-weight:400;letter-spacing:-0.072px;">90%</div>
<div class="hl" style="left:115.5px;top:389.9px;width:1065px;background:#eef1f8"></div>
<div class="hl" style="left:115.5px;top:421.0px;width:1065px;background:#eef1f8"></div>
</div>
</body></html>
